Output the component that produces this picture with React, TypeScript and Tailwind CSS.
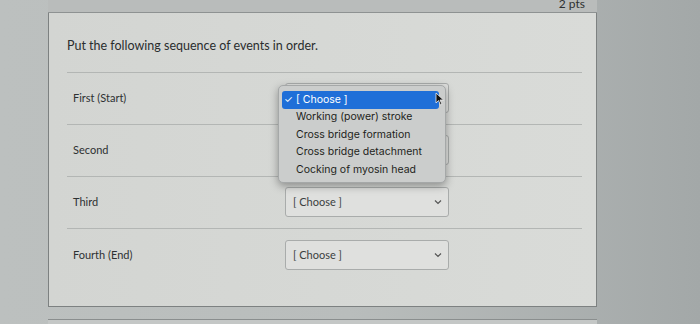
import React from "react";

/* ======================================================
DATA
====================================================== */

const rows = ["First (Start)", "Second", "Third", "Fourth (End)"];

const options = [
  "[ Choose ]",
  "Working (power) stroke",
  "Cross bridge formation",
  "Cross bridge detachment",
  "Cocking of myosin head",
];

const lato = { fontFamily: "Lato, 'Open Sans', sans-serif" };

/* ======================================================
PIECES
====================================================== */

const Chevron = () => (
  <svg width="8" height="6" viewBox="0 0 8 6" fill="none">
    <path d="M1 1.5 4 4.5 7 1.5" stroke="#555" strokeWidth="1.2" />
  </svg>
);

const SelectBox = () => (
  <div className="flex h-[30px] w-[164px] items-center justify-between rounded-[3px] border border-[#a9acab] bg-[#dfe0de] pl-[7px] pr-[6px] text-[11px] text-[#3b3f40]">
    <span>[ Choose ]</span>
    <Chevron />
  </div>
);

const Popup = () => (
  <div
    className="absolute left-[278px] top-[85px] w-[168px] rounded-[5px] border border-[#a5a8a8] bg-[#cbcdcc] px-[3px] pt-[5px] pb-[3px] shadow-[0_3px_8px_rgba(0,0,0,0.35)]"
    style={{ fontFamily: "Inter, 'Noto Sans', sans-serif" }}
  >
    {options.map((opt, i) => (
      <div
        key={opt}
        className={`flex h-[17.5px] items-center text-[10.5px] ${
          i === 0
            ? "mr-[3px] rounded-[3px] bg-[#1f6fd8] text-white"
            : "text-[#1e1f20]"
        }`}
      >
        <span className="w-[14px] pl-[2px] text-[10px]">{i === 0 ? "✓" : ""}</span>
        <span>{opt}</span>
      </div>
    ))}
    {/* mouse pointer */}
    <svg
      className="absolute left-[156px] top-[6px]"
      width="10"
      height="14"
      viewBox="0 0 10 14"
    >
      <path d="M1 1 1 11 3.5 8.5 5.5 13 7 12.3 5 8 8.5 8Z" fill="#111" stroke="#eee" strokeWidth="0.8" />
    </svg>
  </div>
);

/* ======================================================
MAIN
====================================================== */

export default function App() {
  return (
    <div
      className="relative h-[324px] w-[700px] overflow-hidden bg-gradient-to-r from-[#bcc0bf] via-[#b9bdbc] to-[#a3a8a8]"
      style={lato}
    >
      <div className="ml-[48px] flex w-[549px] flex-col">
        {/* HEADER STRIP */}
        <div className="flex h-[13px] items-end justify-end border-b border-[#8e9292] bg-[#b9bcbb] pr-[12px]">
          <span className="mb-[2px] text-[12px] leading-none text-[#2d3030]">2 pts</span>
        </div>

        {/* CARD */}
        <div className="h-[294px] border-x border-b border-[#7d8181] bg-gradient-to-r from-[#d3d5d2] to-[#d9dbd8] pl-[18px] pr-[14px]">
          <p className="pt-[24px] text-[12.5px] text-[#2a2d2e]">
            Put the following sequence of events in order.
          </p>

          <div className="mt-[16px] border-t border-[#b3b6b4]" />

          {rows.map((label, i) => (
            <div
              key={label}
              className={`flex h-[52px] items-center ${
                i < rows.length - 1 ? "border-b border-[#b3b6b4]" : ""
              }`}
            >
              <span className="w-[218px] pl-[6px] text-[11px] text-[#2e3132]">
                {label}
              </span>
              <SelectBox />
            </div>
          ))}
        </div>

        {/* NEXT CARD EDGE */}
        <div className="mt-[12px] h-[10px] border-t border-[#8a8e8e] bg-[#c4c7c6]" />
      </div>

      <Popup />
    </div>
  );
}
